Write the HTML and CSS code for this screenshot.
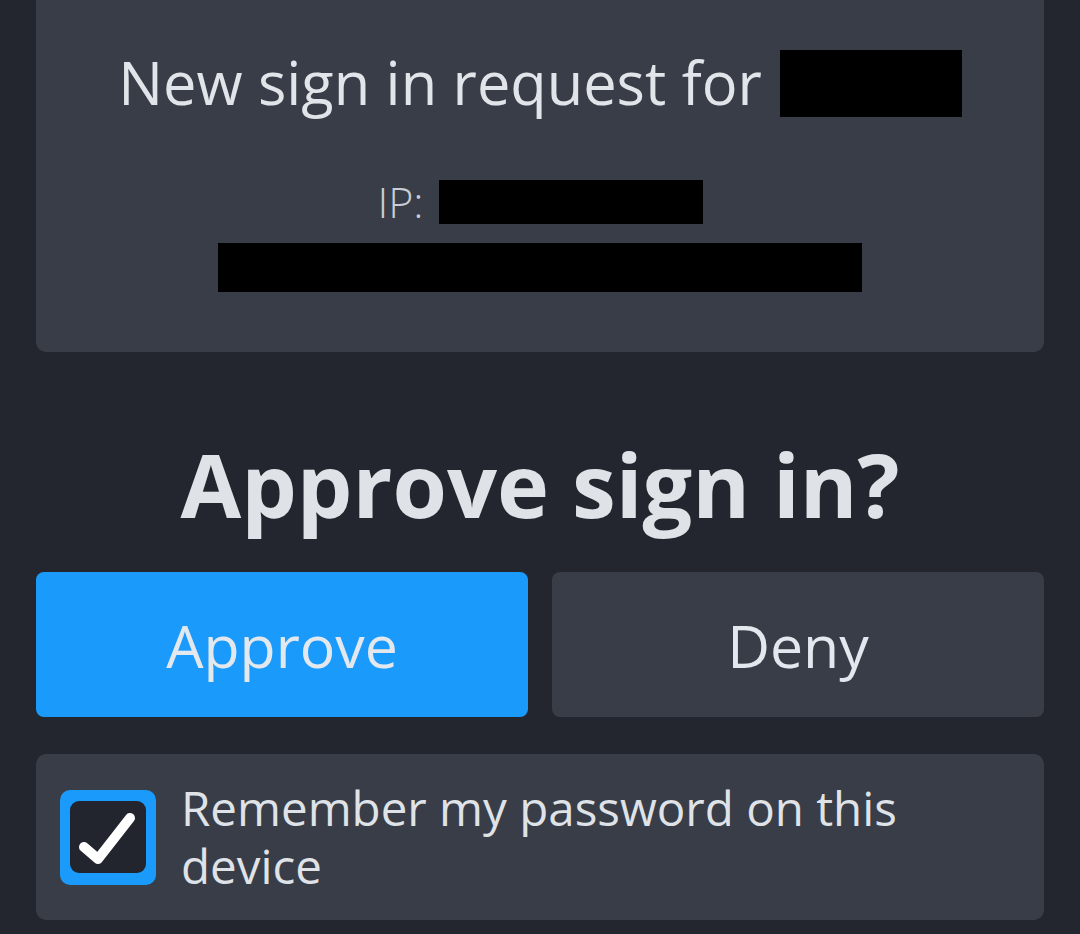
FILE: index.html
```html
<!DOCTYPE html>
<html lang="en">
<head>
<meta charset="utf-8">
<title>Approve sign in?</title>
<link rel="stylesheet" href="styles.css">
</head>
<body>
<main class="page">
  <section class="card request">
    <div class="title-row">
      <span class="title">New sign in request for</span>
      <span class="redact redact-name"></span>
    </div>
    <div class="ip-row">
      <span class="ip-label">IP:</span>
      <span class="redact redact-ip"></span>
    </div>
    <div class="redact redact-loc"></div>
  </section>

  <h1 class="heading">Approve sign in?</h1>

  <div class="actions">
    <button class="btn btn-approve">Approve</button>
    <button class="btn btn-deny">Deny</button>
  </div>

  <label class="card remember">
    <span class="checkbox">
      <span class="checkbox-inner">
        <svg viewBox="0 0 76 72" width="76" height="72" aria-hidden="true">
          <path d="M14 46 L28 58 L60 17" fill="none" stroke="#ffffff" stroke-width="10" stroke-linecap="round" stroke-linejoin="round"/>
        </svg>
      </span>
    </span>
    <span class="remember-text">Remember my password on this device</span>
  </label>
</main>
</body>
</html>
```

FILE: styles.css
```css
html, body {
  margin: 0;
  padding: 0;
  background: #23262e;
}

body {
  font-family: "Open Sans", "Noto Sans", "Liberation Sans", sans-serif;
  color: #dfe3e8;
  overflow: hidden;
}

.page {
  padding: 0 36px;
}

.card {
  background: #393d47;
  border-radius: 10px;
}

.request {
  margin-top: -20px;
  padding: 70px 0 60px;
  display: flex;
  flex-direction: column;
  align-items: center;
}

.title-row {
  display: flex;
  align-items: center;
  gap: 18px;
  height: 67px;
}

.title {
  font-size: 59.5px;
  font-weight: 400;
  line-height: 67px;
  color: #e1e5ea;
  margin-top: -4px;
}

.redact {
  background: #000;
  display: block;
}

.redact-name {
  width: 182px;
  height: 67px;
}

.ip-row {
  margin-top: 63px;
  display: flex;
  align-items: center;
  gap: 15px;
  height: 44px;
}

.ip-label {
  font-size: 43px;
  font-weight: 300;
  line-height: 44px;
  color: #c9ced6;
}

.redact-ip {
  width: 264px;
  height: 44px;
}

.redact-loc {
  margin-top: 19px;
  width: 644px;
  height: 49px;
}

.heading {
  margin: 82px 0 0;
  text-align: center;
  font-size: 88px;
  font-weight: 700;
  line-height: 100px;
  color: #dfe3e8;
  letter-spacing: 0;
}

.actions {
  margin-top: 38px;
  display: grid;
  grid-template-columns: 1fr 1fr;
  gap: 24px;
}

.btn {
  height: 145px;
  border: none;
  border-radius: 8px;
  font-family: inherit;
  font-size: 59px;
  font-weight: 400;
  color: #e3e8ee;
  padding: 0;
}

.btn-approve {
  background: #1a9bfc;
}

.btn-deny {
  background: #393d47;
}

.remember {
  margin-top: 37px;
  height: 166px;
  display: flex;
  align-items: center;
  padding: 0 24px;
  box-sizing: border-box;
  gap: 25px;
}

.checkbox {
  flex: none;
  width: 96px;
  height: 95px;
  border-radius: 10px;
  background: #1a9bfc;
  display: flex;
  align-items: center;
  justify-content: center;
}

.checkbox-inner {
  width: 76px;
  height: 72px;
  border-radius: 9px;
  background: #22252d;
  display: block;
}

.checkbox-inner svg {
  display: block;
}

.remember-text {
  font-size: 47.5px;
  line-height: 58px;
  color: #dfe3e8;
  max-width: 760px;
}
```
